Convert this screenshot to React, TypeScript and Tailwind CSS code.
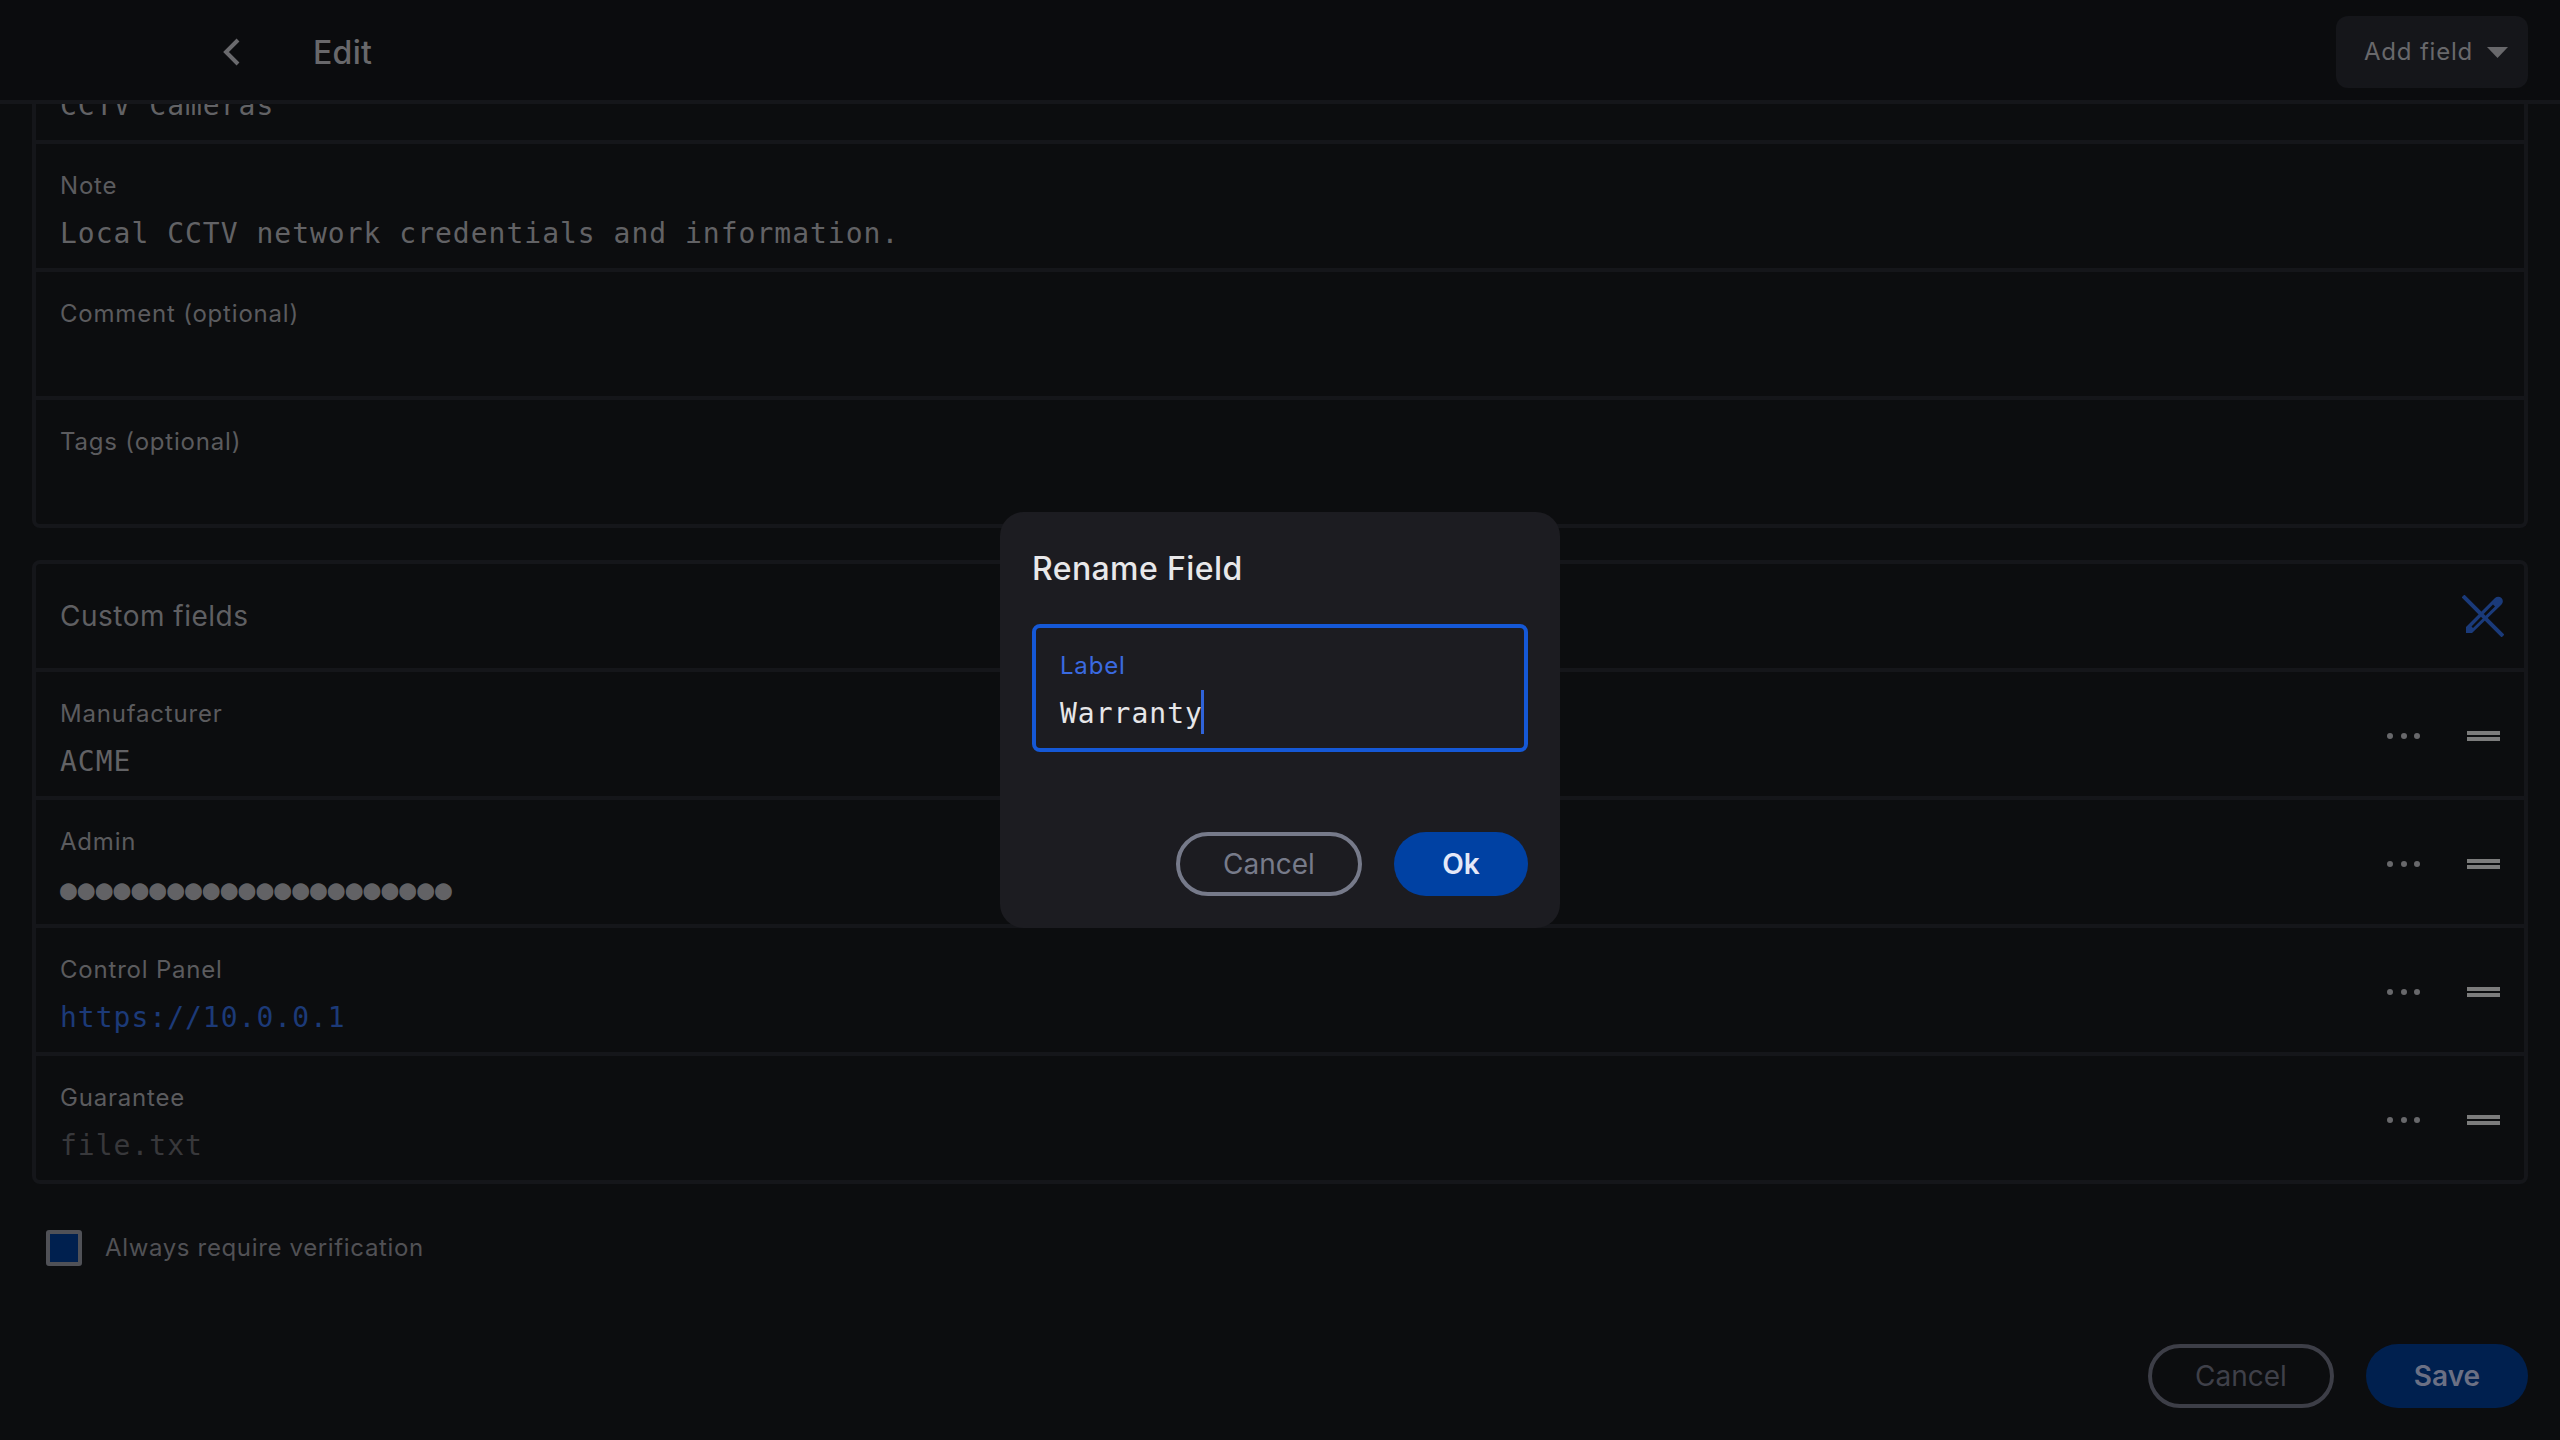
const sans = "font-['Inter','Liberation_Sans',sans-serif]";
const mono = "font-['DejaVu_Sans_Mono',monospace]";

function Row({ label, value, valueClass, last, actions }: { label: string; value?: string; valueClass?: string; last?: boolean; actions?: boolean }) {
  return (
    <div className={`flex items-center justify-between ${last ? "h-[124px]" : "h-[128px] border-b-4 border-[#15161a]"}`}>
      <div className="pl-6 flex flex-col h-full">
        <div className="mt-[26px] h-[32px] leading-[32px] text-[24px] tracking-[0.8px] text-[#5b5b5e]">{label}</div>
        <div className={`mt-[16px] h-[32px] leading-[32px] text-[28px] tracking-[1px] ${mono} ${valueClass ?? "text-[#626265]"}`}>{value}</div>
      </div>
      {actions && (
        <div className="flex items-center pr-[24px] pt-[4px]">
          <div className="flex gap-[7.5px]">
            <span className="w-[6px] h-[6px] rounded-full bg-[#68686b]" />
            <span className="w-[6px] h-[6px] rounded-full bg-[#68686b]" />
            <span className="w-[6px] h-[6px] rounded-full bg-[#68686b]" />
          </div>
          <div className="ml-[47px] w-[33px] flex flex-col gap-[2px]">
            <span className="h-[4px] bg-[#7c7c7c]" />
            <span className="h-[4px] bg-[#7c7c7c]" />
          </div>
        </div>
      )}
    </div>
  );
}

export default function App() {
  return (
    <div className={`relative w-[2560px] h-[1440px] overflow-hidden bg-[#0c0d0f] ${sans}`}>
      <header className="relative z-10 h-[104px] border-b-4 border-[#15161a] bg-[#0b0c0e] flex items-center pr-[32px] pt-[4px]">
        <svg width="20" height="28" viewBox="0 0 20 28" className="ml-[222px]" fill="none">
          <path d="M16 2 L4 14 L16 26" stroke="#6a6a6d" strokeWidth="4" />
        </svg>
        <div className="ml-[71px] pt-[2px] text-[32px] tracking-[0.3px] font-medium text-[#68686b]">Edit</div>
        <div className="ml-auto w-[192px] h-[72px] rounded-[12px] bg-[#15161a] flex items-center pl-[28px]">
          <span className="text-[24px] tracking-[0.8px] text-[#68686b]">Add field</span>
          <svg width="21" height="11" viewBox="0 0 21 11" className="ml-[14px]">
            <path d="M0 0 H21 L10.5 11 Z" fill="#68686b" />
          </svg>
        </div>
      </header>

      <main className="px-[32px] -mt-[88px]">
        <section className="border-x-4 border-b-4 border-[#15161a] rounded-b-[8px]">
          <Row label="Title" value="CCTV Cameras" />
          <Row label="Note" value="Local CCTV network credentials and information." />
          <Row label="Comment (optional)" />
          <div className="h-[124px]">
            <div className="pl-6 pt-[26px] h-[58px] leading-[32px] text-[24px] tracking-[0.8px] text-[#5b5b5e]">Tags (optional)</div>
          </div>
        </section>

        <section className="mt-[32px] border-4 border-[#15161a] rounded-[8px]">
          <div className="h-[108px] border-b-4 border-[#15161a] flex items-center justify-between pl-6 pr-[20px]">
            <span className="text-[28px] tracking-[0.5px] text-[#5f5f62]">Custom fields</span>
            <svg width="42" height="42" viewBox="0 0 42 42" fill="none">
              <path fillRule="evenodd" d="M4 32 L31 5 L33 3 A4 4 0 0 1 39.5 9.5 L37 12 L10 38 H4 Z M9.5 31.5 L11 33 L33 11.5 L31 9.5 Z" fill="#1a3a7a" />
              <path d="M1 1 L41 41" stroke="#1a3a7a" strokeWidth="4" />
            </svg>
          </div>
          <Row label="Manufacturer" value="ACME" actions />
          <Row label="Admin" value="●●●●●●●●●●●●●●●●●●●●●●" actions />
          <Row label="Control Panel" value="https://10.0.0.1" valueClass="text-[#1c3a78]" actions />
          <Row label="Guarantee" value="file.txt" valueClass="text-[#38383b]" actions last />
        </section>

        <div className="mt-[46px] ml-[14px] flex items-center">
          <span className="w-[36px] h-[36px] border-4 border-[#505157] bg-[#00204f] rounded-[3px]" />
          <span className="ml-[23px] text-[24px] tracking-[0.65px] text-[#515155]">Always require verification</span>
        </div>

        <div className="mt-[78px] flex justify-end gap-[32px]">
          <div className="w-[186px] h-[64px] rounded-full border-4 border-[#3d3e47] flex items-center justify-center text-[28px] text-[#3f4049]">Cancel</div>
          <div className="w-[162px] h-[64px] rounded-full bg-[#00204f] flex items-center justify-center text-[28px] font-semibold text-[#6b7084]">Save</div>
        </div>
      </main>

      <div className="absolute left-[1000px] top-[512px] z-20 w-[560px] h-[416px] rounded-[24px] bg-[#1c1c21] px-[32px] pt-[33px]">
        <div className="h-[48px] leading-[48px] text-[32px] tracking-[0.4px] font-medium text-[#e8e8ea]">Rename Field</div>
        <div className="relative mt-[31px] h-[128px] border-4 border-[#1558d6] rounded-[8px] pl-[24px]">
          <div className="mt-[22px] h-[32px] leading-[32px] text-[24px] tracking-[0.8px] text-[#3a6ae0]">Label</div>
          <div className={`mt-[16px] h-[32px] leading-[32px] text-[28px] tracking-[1px] text-[#e6e6e8] ${mono}`}>Warranty</div>
          <span className="absolute left-[165px] top-[62px] w-[3px] h-[44px] bg-[#2f63d9]" />
        </div>
        <div className="mt-[80px] flex justify-end gap-[32px]">
          <div className="w-[186px] h-[64px] rounded-full border-4 border-[#767a8a] flex items-center justify-center text-[28px] text-[#777b8a]">Cancel</div>
          <div className="w-[134px] h-[64px] rounded-full bg-[#0041a3] flex items-center justify-center text-[28px] font-semibold text-[#e4e8f8]">Ok</div>
        </div>
      </div>
    </div>
  );
}
